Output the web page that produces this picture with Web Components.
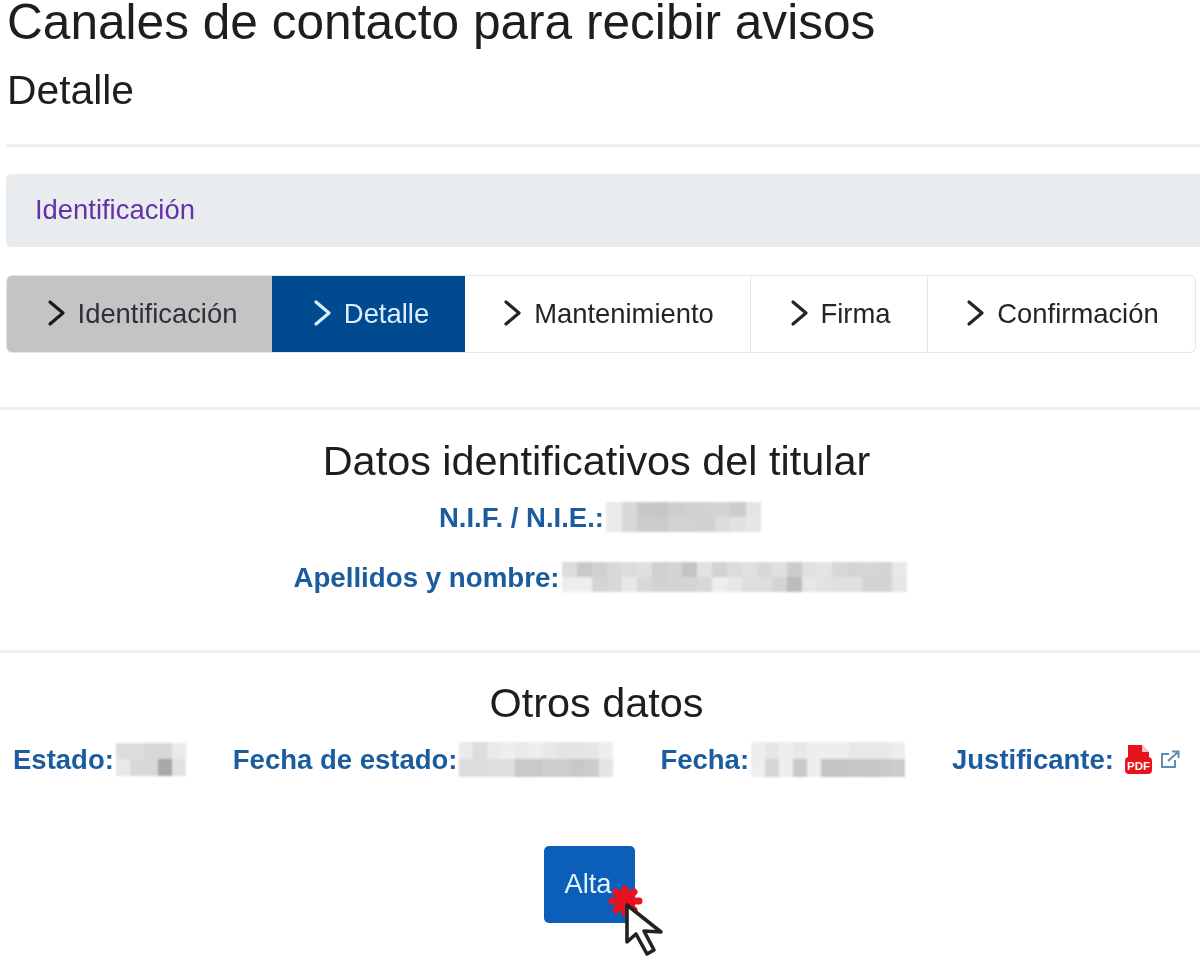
<!DOCTYPE html>
<html lang="es"><head><meta charset="utf-8"><title>Canales</title>
<style>
html,body{margin:0;padding:0;background:#fff;overflow:hidden;height:960px}
body{font-family:"Liberation Sans",Arial,sans-serif;color:#1c1e21;filter:blur(.45px)}
</style></head><body>
<contact-page></contact-page>
<template id="t-page"><style>
:host{display:flex;flex-direction:column;width:1200px}
.head{padding-left:7px}
h1{margin:1px 0 0;font:400 49.6px/42px "Liberation Sans",sans-serif;color:#1c1e21;height:42px;white-space:nowrap}
h2{margin:24px 0 0;font:400 40.8px/46px "Liberation Sans",sans-serif;color:#1c1e21;height:46px}
.r1{margin:31px 0 0 6px;border:0;border-top:3px solid #eceef0}
.crumb{margin:27px 0 0 6px;height:73px;background:#e9ecef;border-radius:5px 0 0 5px;display:flex;align-items:center;padding:0 0 1px 29px;box-sizing:border-box;font-size:27.4px;color:#6132a8}
step-bar{margin:29px 0 0 7px}
.r2{margin:55px 0 0;border:0;border-top:3px solid #eceef0}
.sec{display:flex;flex-direction:column;align-items:center;padding-right:7px}
h3{margin:0;font:400 41.4px/46px "Liberation Sans",sans-serif;color:#1c1e21}
.rows{display:flex;flex-direction:column;align-items:center;padding-left:7px}
.r3{margin:58px 0 0;border:0;border-top:3px solid #eceef0}
.row2{display:flex;justify-content:space-between;align-items:center;margin:10px 20px 0 13px;height:46px}
.act{display:flex;justify-content:center;margin-top:64px;padding-right:22px}
</style>
<div class="head"><h1>Canales de contacto para recibir avisos</h1><h2>Detalle</h2></div>
<hr class="r1">
<div class="crumb">Identificación</div>
<step-bar></step-bar>
<hr class="r2">
<div class="sec" style="margin-top:28px"><h3>Datos identificativos del titular</h3>
<div class="rows">
<data-field label="N.I.F. / N.I.E.:" style="margin-top:18px;height:30px"><blur-block cols="10" size="15.5" rh="15" cells="ea d8 c8 c6 ce d0 d2 d4 cc e4 ea d8 cc cc d2 d2 d0 dc e2 e6"></blur-block></data-field>
<data-field label="Apellidos y nombre:" style="margin-top:30px;height:30px;font-size:27.7px"><blur-block cols="23" size="15" rh="15" cells="dc c8 d0 d8 dc e0 d0 d4 c4 e2 d2 dc e0 d8 e0 cc e0 e4 d8 d4 d6 d4 e8 ee ee d4 d8 e8 d8 d2 d4 d4 d8 ee e8 de de d4 bc e6 e2 e0 e0 d2 d4 e6"></blur-block></data-field>
</div></div>
<hr class="r3">
<div class="sec" style="margin-top:27px"><h3>Otros datos</h3></div>
<div class="row2">
<data-field label="Estado:"><blur-block cols="5" size="14" rh="16.5" cells="dc dc d8 d8 ea e8 d8 d8 a8 e2"></blur-block></data-field>
<data-field label="Fecha de estado:"><blur-block cols="11" size="14" rh="17.5" cells="ea dc ea ee ea ee e8 e4 e4 e6 ee dc dc de de c8 c8 ce ce c8 cc e4"></blur-block></data-field>
<data-field label="Fecha:"><blur-block cols="11" size="14" rh="17.5" cells="ee e6 ee e8 ee ee ee e8 e8 e8 ee ee d6 ee c8 ee c4 c4 c8 c6 c8 cc"></blur-block></data-field>
<data-field label="Justificante:"><pdf-link></pdf-link></data-field>
</div>
<div class="act"><alta-button>Alta</alta-button></div>
</template>

<template id="t-steps"><style>
:host{display:flex;width:1188px;height:76px;box-sizing:border-box;font-size:27.4px;border-radius:5px;box-shadow:0 0 0 1px #e4e6e8}
.s{display:flex;align-items:center;justify-content:center;gap:12px;box-sizing:border-box;padding:0 3px 0 5px;border-right:1px solid #e2e4e6;color:#212529;white-space:nowrap}
.s:last-child{border-right:0}
svg{width:19px;height:28px;flex:none;fill:none;stroke:currentColor;stroke-width:3.2;stroke-linecap:round;stroke-linejoin:round;margin-top:-2px}
.done{background:#c3c4c6;border-radius:5px 0 0 5px;color:#2e3033;border-right:0;padding-left:8px}
.done svg{stroke:#1a1a1a}
.cur{background:#004a8f;color:#dbeeff;border-right:0;padding-left:8px}
</style>
<div class="s done" style="width:265px"><svg viewBox="0 0 19 28"><path d="M3 3 16 14 3 25"/></svg><span>Identificación</span></div>
<div class="s cur" style="width:193px"><svg viewBox="0 0 19 28"><path d="M3 3 16 14 3 25"/></svg><span>Detalle</span></div>
<div class="s" style="width:286px"><svg viewBox="0 0 19 28"><path d="M3 3 16 14 3 25"/></svg><span>Mantenimiento</span></div>
<div class="s" style="width:177px"><svg viewBox="0 0 19 28"><path d="M3 3 16 14 3 25"/></svg><span>Firma</span></div>
<div class="s" style="width:267px"><svg viewBox="0 0 19 28"><path d="M3 3 16 14 3 25"/></svg><span>Confirmación</span></div>
</template>

<template id="t-field"><style>
:host{display:flex;align-items:center;font-weight:700;font-size:27.5px;color:#1b5c9e;white-space:nowrap}
.v{display:flex;align-items:center;margin-left:2px}
.l{position:relative;top:1px}
</style><span class="l"></span><span class="v"><slot></slot></span></template>

<template id="t-pdf"><style>
:host{display:flex;align-items:center;margin-left:9px}
svg{display:block}
</style>
<svg width="28" height="29" viewBox="0 0 28 29" aria-hidden="true"><path d="M3 0H17L24 7V14H3Z" fill="#e8141c"/><path d="M17 0V7H24Z" fill="#fff" opacity=".75"/><rect x="0" y="12" width="27" height="17" rx="4" fill="#e8141c"/><text x="13.500" y="25" text-anchor="middle" font-family="Liberation Sans,sans-serif" font-weight="700" font-size="11.5" fill="#fff">PDF</text></svg>
<svg width="20" height="19" viewBox="0 0 20 19" style="margin-left:7px" fill="none" stroke="#5d8db5" stroke-width="2"><path d="M9 4H2V17H15V10"/><path d="M8 11 18 2M12 1.500H18.500V8"/></svg>
</template>

<template id="t-btn"><style>
:host{display:block;position:relative;width:91px;height:77px}
.b{box-sizing:border-box;width:91px;height:77px;background:#0b5fb8;border-radius:5px;color:#e4f4ff;font-size:27.4px;display:flex;align-items:center;justify-content:center;padding:0 2px 2px 0}
svg{position:absolute;left:58px;top:36px;overflow:visible}
</style><div class="b"><slot></slot></div>
<svg width="66" height="76" viewBox="0 0 66 76" aria-hidden="true">
<g stroke="#ec1320" stroke-width="7" stroke-linecap="round"><path d="M23 7V31M10 19H37M14 10 32 28M32 10 14 28"/></g><circle cx="23" cy="19" r="10" fill="#e8101c"/>
<path d="M25 23 25 60 34 52 45 72 52 68 42 49 59 50Z" fill="#fff" stroke="#222" stroke-width="3.600" stroke-linejoin="round"/>
</svg></template>

<script>
function mount(el,id){const r=el.attachShadow({mode:'open'});r.appendChild(document.getElementById(id).content.cloneNode(true));return r}
customElements.define('contact-page',class extends HTMLElement{constructor(){super();mount(this,'t-page')}});
customElements.define('step-bar',class extends HTMLElement{constructor(){super();mount(this,'t-steps')}});
customElements.define('data-field',class extends HTMLElement{constructor(){super();this._r=mount(this,'t-field')}
connectedCallback(){this._r.querySelector('.l').textContent=this.getAttribute('label')}});
customElements.define('pdf-link',class extends HTMLElement{constructor(){super();mount(this,'t-pdf')}});
customElements.define('alta-button',class extends HTMLElement{constructor(){super();mount(this,'t-btn')}});
customElements.define('blur-block',class extends HTMLElement{constructor(){super();this.attachShadow({mode:'open'})}
connectedCallback(){const c=+this.getAttribute('cols'),s=this.getAttribute('size'),h=this.getAttribute('rh');
const cells=this.getAttribute('cells').trim().split(/\s+/).map(v=>`<i style="background:#${v}${v}${v}"></i>`).join('');
this.shadowRoot.innerHTML=`<style>:host{display:grid;grid-template-columns:repeat(${c},${s}px);grid-auto-rows:${h}px;filter:blur(1px)}</style>${cells}`}});
</script>
</body></html>
